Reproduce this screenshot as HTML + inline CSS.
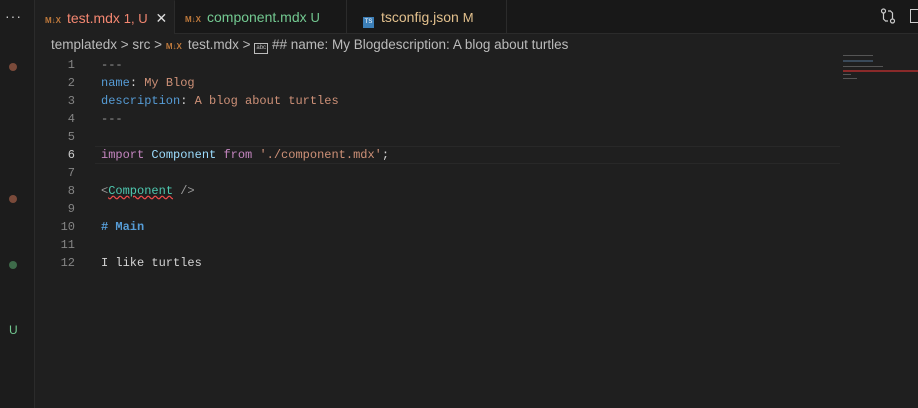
<!DOCTYPE html>
<html><head><meta charset="utf-8"><style>
*{margin:0;padding:0;box-sizing:border-box}
body{width:918px;height:408px;background:#1f1f1f;overflow:hidden;position:relative;font-family:"Liberation Sans",sans-serif}
.side{position:absolute;left:0;top:0;width:35px;height:408px;background:#1c1c1c;border-right:1px solid #2b2b2b}
.dot{position:absolute;left:9px;width:8px;height:8px;border-radius:50%}
.tabs{position:absolute;left:35px;top:0;right:0;height:34px;background:#181818;border-bottom:1px solid #2b2b2b}
.tab{position:absolute;top:0;height:34px;border-right:1px solid #2b2b2b;font-size:14px;line-height:34px;white-space:nowrap}
.mdx{font-size:8px;color:#c07a3c;font-weight:bold;margin-right:6px;letter-spacing:0}
.crumb{position:absolute;left:51px;top:36px;font-size:13.5px;color:#bbb;white-space:nowrap;line-height:18px}
.code{position:absolute;left:0;top:56px;font-family:"Liberation Mono",monospace;font-size:12px}
.ln{position:absolute;left:0;width:75px;text-align:right;color:#858585;height:18px;line-height:18px}
.tx{position:absolute;left:101px;height:18px;line-height:18px;white-space:pre;color:#d4d4d4}
.k{color:#569cd6}.s{color:#ce9178}.p{color:#c586c0}.v{color:#9cdcfe}.g{color:#4ec9b0}.gr{color:#9a9a9a}
</style></head><body>
<div class="side">
<div style="position:absolute;left:5px;top:8px;color:#ccc;font-size:14px;letter-spacing:1px">···</div>
<div class="dot" style="top:63px;background:#7a4a3a"></div>
<div class="dot" style="top:195px;background:#7a4a3a"></div>
<div class="dot" style="top:261px;background:#3e6b4a"></div>
<div style="position:absolute;left:9px;top:323px;color:#73c991;font-size:12px">U</div>
</div>
<div class="tabs">
<div class="tab" style="left:0;width:140px;background:#1f1f1f;padding-left:10px;border-top:1px solid #1f1f1f"><span class="mdx">M↓X</span><span style="color:#f48771">test.mdx</span> <span style="color:#f48771;font-size:13px">1, U</span> <span style="color:#ddd;margin-left:4px">✕</span></div>
<div class="tab" style="left:140px;width:172px;padding-left:10px"><span class="mdx">M↓X</span><span style="color:#73c991">component.mdx</span> <span style="color:#73c991;font-size:13px">U</span></div>
<div class="tab" style="left:312px;width:160px;padding-left:16px"><span style="display:inline-block;width:11px;height:11px;background:#3c7fb8;vertical-align:-1px;margin-right:7px;font-size:6px;line-height:11px;color:#fff;text-align:center">TS</span><span style="color:#e2c08d">tsconfig.json</span> <span style="color:#e2c08d;font-size:13px">M</span></div>
<svg style="position:absolute;left:845px;top:8px" width="16" height="16" viewBox="0 0 16 16" fill="none" stroke="#ccc" stroke-width="1.2"><circle cx="3.5" cy="3" r="2"/><circle cx="12.5" cy="13" r="2"/><path d="M3.5 5v6l2 2M12.5 11V5l-2-2M5 13h3M11 3H8"/></svg>
<div style="position:absolute;left:875px;top:9px;width:10px;height:14px;border:1.3px solid #ccc;border-right:none"></div>
</div>
<div class="crumb">templatedx &gt; src &gt; <span class="mdx">M↓X</span>test.mdx &gt; <span style="display:inline-block;width:14px;height:11px;border:1px solid #bbb;font-size:6px;line-height:9px;text-align:center;vertical-align:0">abc</span> ## name: My Blogdescription: A blog about turtles</div>
<div style="position:absolute;left:95px;top:146px;width:745px;height:18px;border-top:1px solid #282828;border-bottom:1px solid #282828"></div>
<div class="code">
<div class="ln" style="top:0">1</div><div class="tx gr" style="top:0">---</div>
<div class="ln" style="top:18px">2</div><div class="tx" style="top:18px"><span class="k">name</span>: <span class="s">My Blog</span></div>
<div class="ln" style="top:36px">3</div><div class="tx" style="top:36px"><span class="k">description</span>: <span class="s">A blog about turtles</span></div>
<div class="ln" style="top:54px">4</div><div class="tx gr" style="top:54px">---</div>
<div class="ln" style="top:72px">5</div>
<div class="ln" style="top:90px;color:#ccc">6</div><div class="tx" style="top:90px"><span class="p">import</span> <span class="v">Component</span> <span class="p">from</span> <span class="s">'./component.mdx'</span>;</div>
<div class="ln" style="top:108px">7</div>
<div class="ln" style="top:126px">8</div><div class="tx" style="top:126px"><span class="gr">&lt;</span><span class="g" style="text-decoration:underline wavy #f14c4c">Component</span> <span class="gr">/&gt;</span></div>
<div class="ln" style="top:144px">9</div>
<div class="ln" style="top:162px">10</div><div class="tx" style="top:162px;font-weight:bold"><span class="k"># Main</span></div>
<div class="ln" style="top:180px">11</div>
<div class="ln" style="top:198px">12</div><div class="tx" style="top:198px">I like turtles</div>
</div>
<div style="position:absolute;left:843px;top:55px;width:30px;height:1px;background:#555"></div>
<div style="position:absolute;left:843px;top:60px;width:30px;height:2px;background:#3a4a5a"></div>
<div style="position:absolute;left:843px;top:66px;width:40px;height:1px;background:#555"></div>
<div style="position:absolute;left:843px;top:70px;width:75px;height:2px;background:#8a2a2a"></div>
<div style="position:absolute;left:843px;top:74px;width:8px;height:1px;background:#555"></div>
<div style="position:absolute;left:843px;top:78px;width:14px;height:1px;background:#555"></div>
</body></html>
